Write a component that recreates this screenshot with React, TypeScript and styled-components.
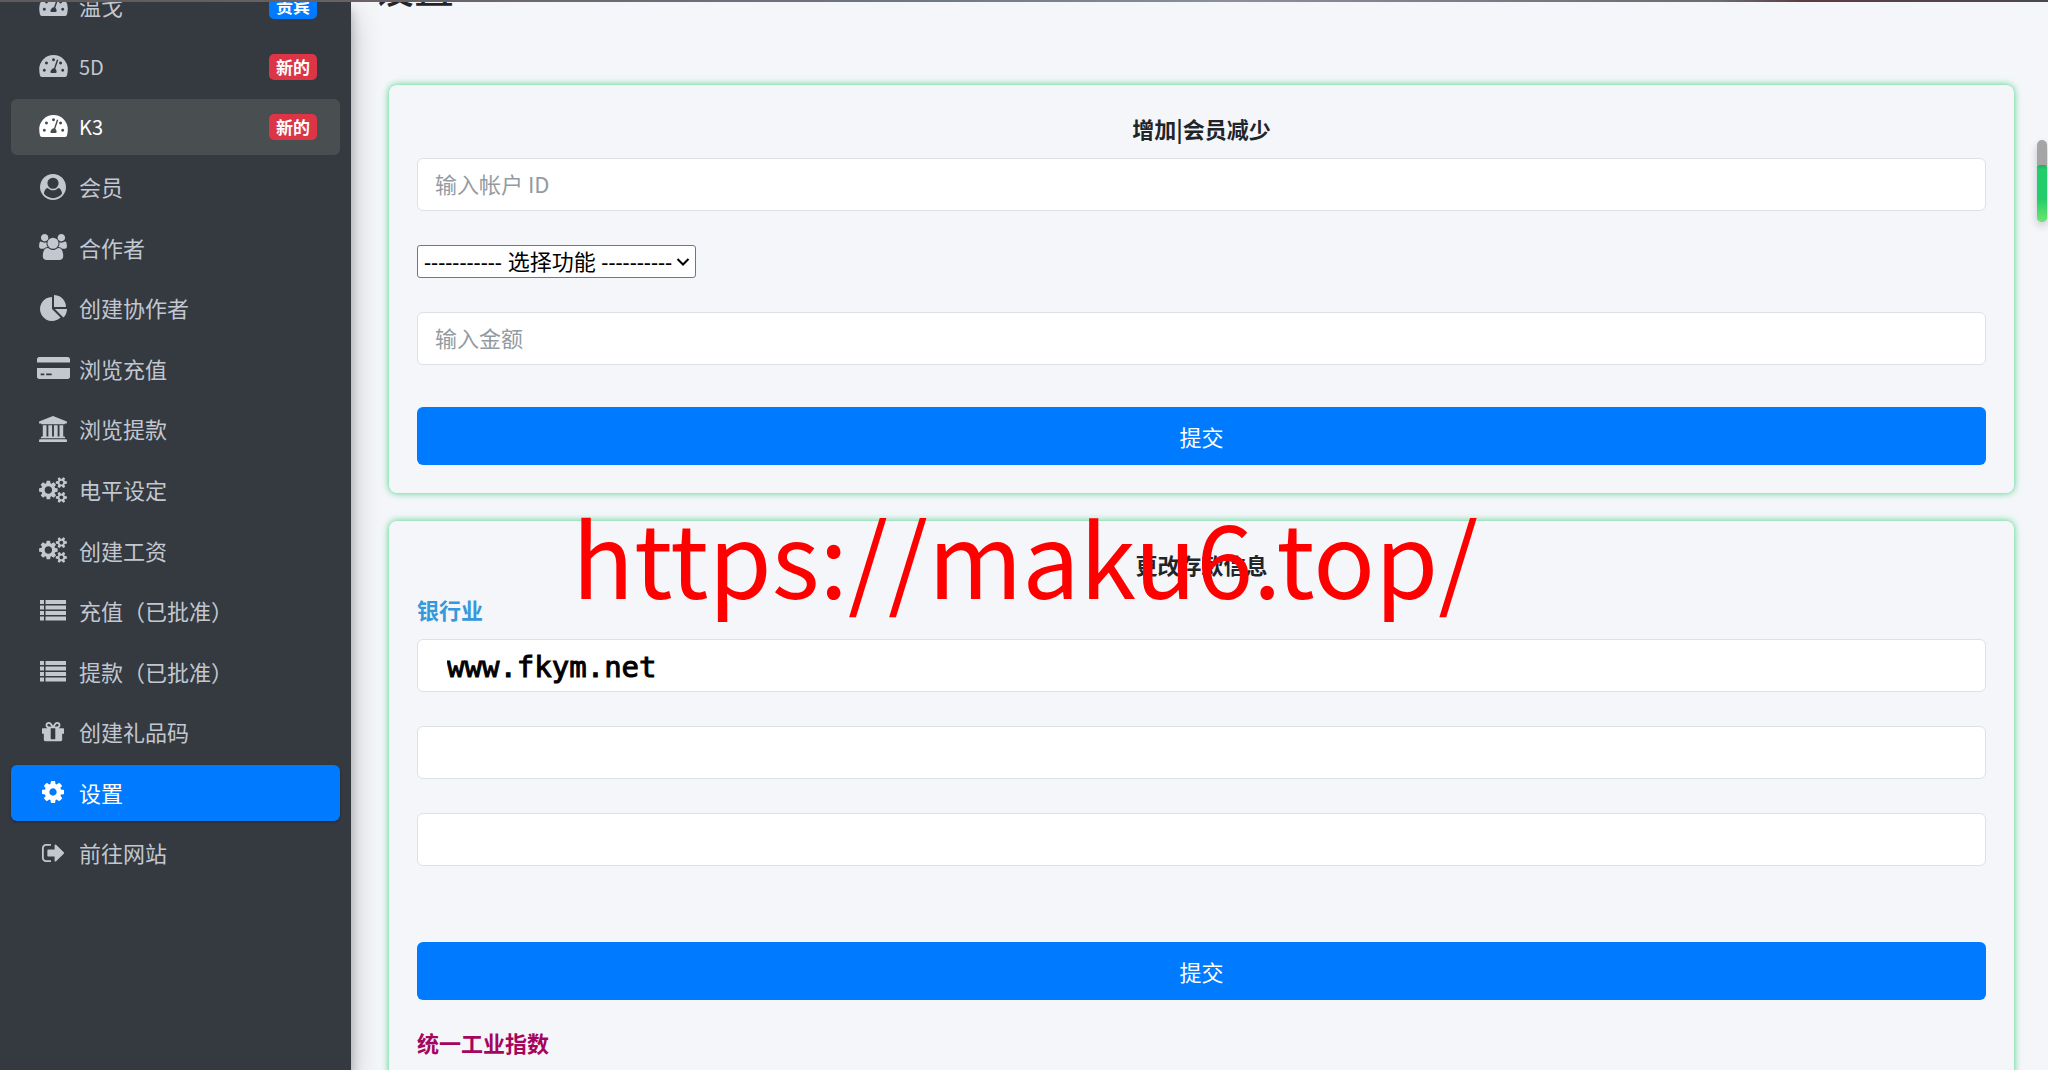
import React from "react";
import styled, { createGlobalStyle, css } from "styled-components";

const GlobalStyle = createGlobalStyle`
  *, *::before, *::after { box-sizing: border-box; }
  html, body { margin: 0; padding: 0; }
  body {
    background: #f4f6f9;
    color: #212529;
    font-family: "Noto Sans CJK SC", "Noto Sans", sans-serif;
    font-size: 22px;
    line-height: 34px;
  }
  h1, h2, ul { margin: 0; padding: 0; }
`;

const Shell = styled.div`
  position: relative;
  display: flex;
  height: 100vh;
  overflow: hidden;
`;

const TopEdge = styled.div`
  position: absolute;
  z-index: 3;
  inset: 0 0 auto 0;
  height: 2px;
  background: linear-gradient(90deg, #5c5a5c, #6a6264 18%, #6f7686 45%, #8a8f9b 60%, #6b6b70 84%, #5a3c42 88%, #4d4a4f);
`;

const Sidebar = styled.nav`
  z-index: 1;
  flex: 0 0 351px;
  padding: 0 11px 188px;
  background: #343a40;
  box-shadow: 0 14px 28px rgba(0, 0, 0, 0.25), 0 10px 10px rgba(0, 0, 0, 0.22);
`;

const NavList = styled.ul`
  display: flex;
  flex-direction: column;
  justify-content: space-between;
  height: calc(100% + 22px);
  margin-top: -22px;
  list-style: none;
`;

type NavState = "hover" | "active";

const NavLink = styled.a<{ $state?: NavState }>`
  display: flex;
  align-items: center;
  gap: 8px;
  height: 56px;
  padding: 0 23px 0 24px;
  border-radius: 6px;
  color: #c2c7d0;
  text-decoration: none;
  ${({ $state }) =>
    $state === "hover" &&
    css`
      background: #494e51;
      color: #fff;
    `}
  ${({ $state }) =>
    $state === "active" &&
    css`
      background: #007bff;
      color: #fff;
      box-shadow: 0 1px 3px rgba(0, 0, 0, 0.12), 0 1px 2px rgba(0, 0, 0, 0.24);
    `}
`;

const IconBox = styled.span`
  display: flex;
  flex: 0 0 36px;
  align-items: center;
  justify-content: center;
  padding-bottom: 2px;

  svg {
    display: block;
    fill: currentColor;
  }
`;

const NavText = styled.span<{ $latin: boolean }>`
  flex: 1;
  padding-bottom: ${({ $latin }) => ($latin ? 0 : 3)}px;
  font-size: ${({ $latin }) => ($latin ? 20 : 22)}px;
`;

const Badge = styled.span<{ $tone: string }>`
  padding: 0 7px;
  border-radius: 5px;
  background: ${({ $tone }) => $tone};
  color: #fff;
  font-size: 17px;
  font-weight: 700;
  line-height: 26px;
`;

const Main = styled.main`
  flex: 1;
  min-width: 0;
  margin-top: -38px;
  padding: 0 34px 0 23px;
`;

const PageTitle = styled.h1`
  margin-bottom: 75px;
  font-size: 40px;
  font-weight: 500;
  line-height: 48px;
`;

const Cards = styled.div`
  display: flex;
  flex-direction: column;
  gap: 28px;
  padding-left: 15px;
`;

const Card = styled.form`
  display: flex;
  flex-direction: column;
  padding: 28px;
  border-radius: 8px;
  box-shadow: 0 0 7px #3fcf7f;
`;

const CardTitle = styled.h2`
  margin-bottom: 15px;
  font-size: 22px;
  font-weight: 700;
  line-height: 30px;
  text-align: center;
`;

const FieldStack = styled.div`
  display: flex;
  flex-direction: column;
  align-items: flex-start;
  gap: 34px;
`;

const FieldLabel = styled.label<{ $color: string }>`
  margin-bottom: 15px;
  color: ${({ $color }) => $color};
  font-weight: 700;
  line-height: 30px;
`;

const TextInput = styled.input`
  width: 100%;
  height: 53px;
  padding: 0 17px 4px;
  border: 1px solid #dde1e6;
  border-radius: 6px;
  background: #fff;
  color: #495057;
  font: inherit;

  &::placeholder {
    color: #939ba2;
    opacity: 1;
  }
`;

const SiteInput = styled(TextInput)`
  padding: 2px 17px 0 29px;
  color: #000;
  font-family: "DejaVu Sans Mono", monospace;
  font-size: 29px;
  -webkit-text-stroke: 1px #000;
`;

const SelectBox = styled.div`
  display: grid;
  width: 279px;
  height: 33px;

  > * {
    grid-area: 1 / 1;
  }

  svg {
    align-self: center;
    justify-self: end;
    margin-right: 6px;
    pointer-events: none;
  }
`;

const Select = styled.select`
  appearance: none;
  padding: 0 6px 2px;
  border: 1px solid #767676;
  border-radius: 3px;
  background-color: #fff;
  color: #000;
  font-family: "Noto Sans", "Noto Sans CJK SC", sans-serif;
  font-size: 22px;
  line-height: 28px;
`;

const Submit = styled.button<{ $gap: number }>`
  height: 58px;
  margin-top: ${({ $gap }) => $gap}px;
  border: 0;
  border-radius: 6px;
  background: #007bff;
  color: #fff;
  font: inherit;
`;

const NextGroup = styled.div`
  display: flex;
  flex-direction: column;
  margin-top: 27px;
`;

const ScrollMeter = styled.div`
  position: absolute;
  z-index: 2;
  top: 140px;
  right: 1px;
  display: flex;
  align-items: flex-end;
  width: 10px;
  height: 82px;
  border-radius: 5px;
  background: #a5a5a5;
  box-shadow: 0 4px 9px rgba(0, 0, 0, 0.2);
`;

const ScrollMeterFill = styled.div`
  width: 100%;
  height: 57px;
  border-radius: 3px 3px 5px 5px;
  background: linear-gradient(#17b35b, #25cc6c 8%, #25cc6c 60%, #6be86f);
`;

const Watermark = styled.div`
  position: absolute;
  z-index: 2;
  top: 480px;
  left: 572px;
  color: #f00;
  font-size: 102px;
  line-height: 150px;
  white-space: nowrap;
  pointer-events: none;
`;

type IconSpec = { box: string; w: number; h: number; d: string };

const icons: Record<string, IconSpec> = {
  dial: {
    box: "0 0 87 67",
    w: 29,
    h: 22,
    d: "M8 67Q3 67 2 61Q0 52 0 43.500A43.500 43.500 0 0 1 87 43.500Q87 52 85 61Q84 67 79 67ZM22 20a4.500 4.500 0 1 0 .1 0zM43.500 10a4.500 4.500 0 1 0 .1 0zM65 20a4.500 4.500 0 1 0 .1 0zM15.500 42a4.500 4.500 0 1 0 .1 0zM71.500 42a4.500 4.500 0 1 0 .1 0zM54 14L45 40Q36 41 34 52Q34 55 37 55L50 55Q53 55 53 51Q53 45 49 42L58 15.500Z",
  },
  user: {
    box: "0 0 1792 1792",
    w: 26,
    h: 26,
    d: "M1523 1339q-22-155-87.5-257.5t-184.500-118.5q-67 74-159.500 115.500t-195.500 41.500-195.500-41.500-159.500-115.500q-119 16-184.500 118.500t-87.500 257.500q106 150 271 237.500t356 87.500 356-87.500 271-237.500zm-243-699q0-159-112.500-271.500t-271.500-112.500-271.500 112.500-112.500 271.500 112.500 271.500 271.500 112.500 271.500-112.500 112.500-271.500zm512 256q0 182-71 347.500t-190.500 286-285.500 191.500-349 71q-182 0-348-71t-286-191-191-286-71-348 71-348 191-286 286-191 348-71 348 71 286 191 191 286 71 348z",
  },
  users: {
    box: "64 0 1920 1792",
    w: 28,
    h: 26,
    d: "M657 896q-162 5-265 128h-134q-82 0-138-40.500t-56-118.500q0-353 124-353 6 0 43.500 21t97.500 42.500 119 21.500q67 0 133-23-5 37-5 66 0 139 81 256zm1071 637q0 120-73 189.500t-194 69.500h-874q-121 0-194-69.500t-73-189.500q0-53 3.500-103.500t14-109 26.500-108.500 43-97.500 62-81 85.500-53.500 111.500-20q10 0 43 21.500t73 48 107 48 135 21.500 135-21.500 107-48 73-48 43-21.500q61 0 111.500 20t85.500 53.500 62 81 43 97.500 26.500 108.500 14 109 3.500 103.500zm-1024-1277q0 106-75 181t-181 75-181-75-75-181 75-181 181-75 181 75 75 181zm704 384q0 159-112.500 271.500t-271.500 112.500-271.500-112.500-112.500-271.500 112.500-271.500 271.500-112.500 271.500 112.500 112.500 271.500zm576 225q0 78-56 118.500t-138 40.500h-134q-103-123-265-128 81-117 81-256 0-29-5-66 66 23 133 23 59 0 119-21.500t97.500-42.500 43.500-21q124 0 124 353zm-128-609q0 106-75 181t-181 75-181-75-75-181 75-181 181-75 181 75 75 181z",
  },
  pie: {
    box: "0 0 1728 1664",
    w: 27,
    h: 26,
    d: "M768 890l546 546q-106 108-247.500 168t-298.500 60q-209 0-385.500-103t-279.500-279.500-103-385.500 103-385.500 279.500-279.500 385.500-103v762zm187 6h773q0 157-60 298.500t-168 247.500zm709-128h-768v-768q209 0 385.500 103t279.500 279.500 103 385.500z",
  },
  card: {
    box: "0 128 2304 1536",
    w: 33,
    h: 22,
    d: "M0 1504v-608h2304v608q0 66-47 113t-113 47h-1984q-66 0-113-47t-47-113zm640-224v128h384v-128h-384zm-384 0v128h256v-128h-256zm1888-1152q66 0 113 47t47 113v224h-2304v-224q0-66 47-113t113-47h1984z",
  },
  bank: {
    box: "0 0 1920 1792",
    w: 28,
    h: 26,
    d: "M960 0l960 384v128h-128q0 26-20.500 45t-48.500 19h-1526q-28 0-48.500-19t-20.500-45h-128v-128zM256 640h256v768h128v-768h256v768h128v-768h256v768h128v-768h256v768h59q28 0 48.500 19t20.500 45v64h-1664v-64q0-26 20.500-45t48.500-19h59zM1851 1600q28 0 48.500 19t20.500 45v128h-1920v-128q0-26 20.500-45t48.500-19z",
  },
  cogs: {
    box: "0 0 1920 1792",
    w: 28,
    h: 26,
    d: "M896 896q0-106-75-181t-181-75-181 75-75 181 75 181 181 75 181-75 75-181zm768 512q0-52-38-90t-90-38-90 38-38 90q0 53 37.500 90.500t90.500 37.500 90.500-37.500 37.500-90.500zm0-1024q0-52-38-90t-90-38-90 38-38 90q0 53 37.500 90.500t90.500 37.500 90.500-37.500 37.500-90.500zm-384 421v185q0 10-7 19.500t-16 10.500l-155 24q-11 35-32 76 34 48 90 115 7 11 7 20 0 12-7 19-23 30-82.500 89.500t-78.500 59.500q-11 0-21-7l-115-90q-37 19-77 31-11 108-23 155-7 24-30 24h-186q-11 0-20-7.500t-10-17.500l-23-153q-34-10-75-31l-118 89q-7 7-20 7-11 0-21-8-144-133-144-160 0-9 7-19 10-14 41-53t47-61q-23-44-35-82l-152-24q-10-1-17-9.500t-7-19.500v-185q0-10 7-19.500t16-10.500l155-24q11-35 32-76-34-48-90-115-7-11-7-20 0-12 7-20 22-30 82-89t79-59q11 0 21 7l115 90q34-18 77-32 11-108 23-154 7-24 30-24h186q11 0 20 7.500t10 17.500l23 153q34 10 75 31l118-89q8-7 20-7 11 0 21 8 144 133 144 160 0 8-7 19-12 16-42 54t-45 60q23 48 34 82l152 23q10 2 17 10.500t7 19.500zm640 533v140q0 16-149 31-12 27-30 52 51 113 51 138 0 4-4 7-122 71-124 71-8 0-46-47t-52-68q-20 2-30 2t-30-2q-14 21-52 68t-46 47q-2 0-124-71-4-3-4-7 0-25 51-138-18-25-30-52-149-15-149-31v-140q0-16 149-31 13-29 30-52-51-113-51-138 0-4 4-7 4-2 35-20t59-34 30-16q8 0 46 46.500t52 67.500q20-2 30-2t30 2q51-71 92-112l6-2q4 0 124 70 4 3 4 7 0 25-51 138 17 23 30 52 149 15 149 31zm0-1024v140q0 16-149 31-12 27-30 52 51 113 51 138 0 4-4 7-122 71-124 71-8 0-46-47t-52-68q-20 2-30 2t-30-2q-14 21-52 68t-46 47q-2 0-124-71-4-3-4-7 0-25 51-138-18-25-30-52-149-15-149-31v-140q0-16 149-31 13-29 30-52-51-113-51-138 0-4 4-7 4-2 35-20t59-34 30-16q8 0 46 46.500t52 67.500q20-2 30-2t30 2q51-71 92-112l6-2q4 0 124 70 4 3 4 7 0 25-51 138 17 23 30 52 149 15 149 31z",
  },
  list: {
    box: "0 0 26 21",
    w: 26,
    h: 21,
    d: "M0 0h4v4h-4zM5.500 0h20.500v4h-20.500zM0 5.500h4v4h-4zM5.500 5.500h20.500v4h-20.500zM0 11h4v4h-4zM5.500 11h20.500v4h-20.500zM0 16.500h4v4h-4zM5.500 16.500h20.500v4h-20.500z",
  },
  gift: {
    box: "128 128 1536 1536",
    w: 22,
    h: 22,
    d: "M1056 1356v-716h-320v716q0 25 18 38.500t46 13.500h192q28 0 46-13.500t18-38.500zm-456-844h195l-126-161q-26-31-69-31-40 0-68 28t-28 68 28 68 68 28zm688-96q0-40-28-68t-68-28q-43 0-69 31l-125 161h194q40 0 68-28t28-68zm376 256v320q0 14-9 23t-23 9h-96v416q0 40-28 68t-68 28h-1088q-40 0-68-28t-28-68v-416h-96q-14 0-23-9t-9-23v-320q0-14 9-23t23-9h440q-93 0-158.500-65.500t-65.500-158.500 65.500-158.500 158.500-65.500q107 0 168 77l128 165 128-165q61-77 168-77 93 0 158.500 65.500t65.500 158.500-65.500 158.500-158.500 65.500h440q14 0 23 9t9 23z",
  },
  cog: {
    box: "128 128 1536 1536",
    w: 22,
    h: 22,
    d: "M1152 896q0-106-75-181t-181-75-181 75-75 181 75 181 181 75 181-75 75-181zm512-109v222q0 12-8 23t-20 13l-185 28q-19 54-39 91 35 50 107 138 10 12 10 25t-9 23q-27 37-99 108t-94 71q-12 0-26-9l-138-108q-44 23-91 38-16 136-29 186-7 28-36 28h-222q-14 0-24.500-8.500t-11.500-21.500l-28-184q-49-16-90-37l-141 107q-10 9-25 9-14 0-25-11-126-114-165-168-7-10-7-23 0-12 8-23 15-21 51-66.500t54-70.500q-27-50-41-99l-183-27q-13-2-21-12.500t-8-23.500v-222q0-12 8-23t19-13l186-28q14-46 39-92-40-57-107-138-10-12-10-24 0-10 9-23 26-36 98.500-107.500t94.500-71.500q13 0 26 10l138 107q44-23 91-38 16-136 29-186 7-28 36-28h222q14 0 24.500 8.500t11.500 21.500l28 184q49 16 90 37l142-107q9-9 24-9 13 0 25 10 129 119 165 170 7 8 7 22 0 12-8 23-15 21-51 66.500t-54 70.500q26 50 41 98l183 28q13 2 21 12.500t8 23.500z",
  },
  exit: {
    box: "0 256 1696 1280",
    w: 24,
    h: 18,
    d: "M704 1440q0 4 1 20t.5 26.500-3 23.500-10 19.500-20.500 6.500h-320q-119 0-203.500-84.500t-84.500-203.500v-704q0-119 84.500-203.500t203.500-84.500h320q13 0 22.500 9.500t9.500 22.500q0 4 1 20t.5 26.500-3 23.500-10 19.500-20.500 6.500h-320q-66 0-113 47t-47 113v704q0 66 47 113t113 47h312l11.500 1 11.500 3 8 5.500 7 9 2 13.500zm928-544q0 26-19 45l-544 544q-19 19-45 19t-45-19-19-45v-288h-448q-26 0-45-19t-19-45v-384q0-26 19-45t45-19h448v-288q0-26 19-45t45-19 45 19l544 544q19 19 19 45z",
  },
};

function Icon({ name }: { name: string }) {
  const { box, w, h, d } = icons[name];
  return (
    <IconBox>
      <svg viewBox={box} width={w} height={h} aria-hidden="true">
        <path d={d} fillRule="evenodd" />
      </svg>
    </IconBox>
  );
}

type Item = {
  icon: string;
  text: string;
  latin?: boolean;
  badge?: string;
  tone?: string;
  state?: NavState;
};

const items: Item[] = [
  { icon: "dial", text: "温戈", badge: "贵宾", tone: "#007bff" },
  { icon: "dial", text: "5D", latin: true, badge: "新的", tone: "#dc3545" },
  { icon: "dial", text: "K3", latin: true, badge: "新的", tone: "#dc3545", state: "hover" },
  { icon: "user", text: "会员" },
  { icon: "users", text: "合作者" },
  { icon: "pie", text: "创建协作者" },
  { icon: "card", text: "浏览充值" },
  { icon: "bank", text: "浏览提款" },
  { icon: "cogs", text: "电平设定" },
  { icon: "cogs", text: "创建工资" },
  { icon: "list", text: "充值（已批准）" },
  { icon: "list", text: "提款（已批准）" },
  { icon: "gift", text: "创建礼品码" },
  { icon: "cog", text: "设置", state: "active" },
  { icon: "exit", text: "前往网站" },
];

export default function App() {
  return (
    <>
      <GlobalStyle />
      <Shell>
        <TopEdge />
        <Sidebar>
          <NavList>
            {items.map((item) => (
              <li key={item.text}>
                <NavLink href="#" $state={item.state}>
                  <Icon name={item.icon} />
                  <NavText $latin={!!item.latin}>{item.text}</NavText>
                  {item.badge && <Badge $tone={item.tone!}>{item.badge}</Badge>}
                </NavLink>
              </li>
            ))}
          </NavList>
        </Sidebar>
        <Main>
          <PageTitle>设置</PageTitle>
          <Cards>
            <Card>
              <CardTitle>增加|会员减少</CardTitle>
              <FieldStack>
                <TextInput placeholder="输入帐户 ID" aria-label="输入帐户 ID" />
                <SelectBox>
                  <Select aria-label="选择功能">
                    <option>----------- 选择功能 ----------</option>
                  </Select>
                  <svg width="14" height="10" viewBox="0 0 14 10" aria-hidden="true">
                    <path d="M1.500 2l5.500 5.500L12.500 2" fill="none" stroke="#000" strokeWidth="2" />
                  </svg>
                </SelectBox>
                <TextInput placeholder="输入金额" aria-label="输入金额" />
              </FieldStack>
              <Submit type="button" $gap={42}>提交</Submit>
            </Card>
            <Card>
              <CardTitle>更改存款信息</CardTitle>
              <FieldLabel htmlFor="bank" $color="#3498db">银行业</FieldLabel>
              <FieldStack>
                <SiteInput id="bank" defaultValue="www.fkym.net" />
                <TextInput aria-label="银行业" />
                <TextInput aria-label="银行业" />
              </FieldStack>
              <Submit type="button" $gap={76}>提交</Submit>
              <NextGroup>
                <FieldLabel htmlFor="upi" $color="#a6055d">统一工业指数</FieldLabel>
                <TextInput id="upi" />
              </NextGroup>
            </Card>
          </Cards>
        </Main>
        <ScrollMeter>
          <ScrollMeterFill />
        </ScrollMeter>
        <Watermark>https://maku6.top/</Watermark>
      </Shell>
    </>
  );
}
